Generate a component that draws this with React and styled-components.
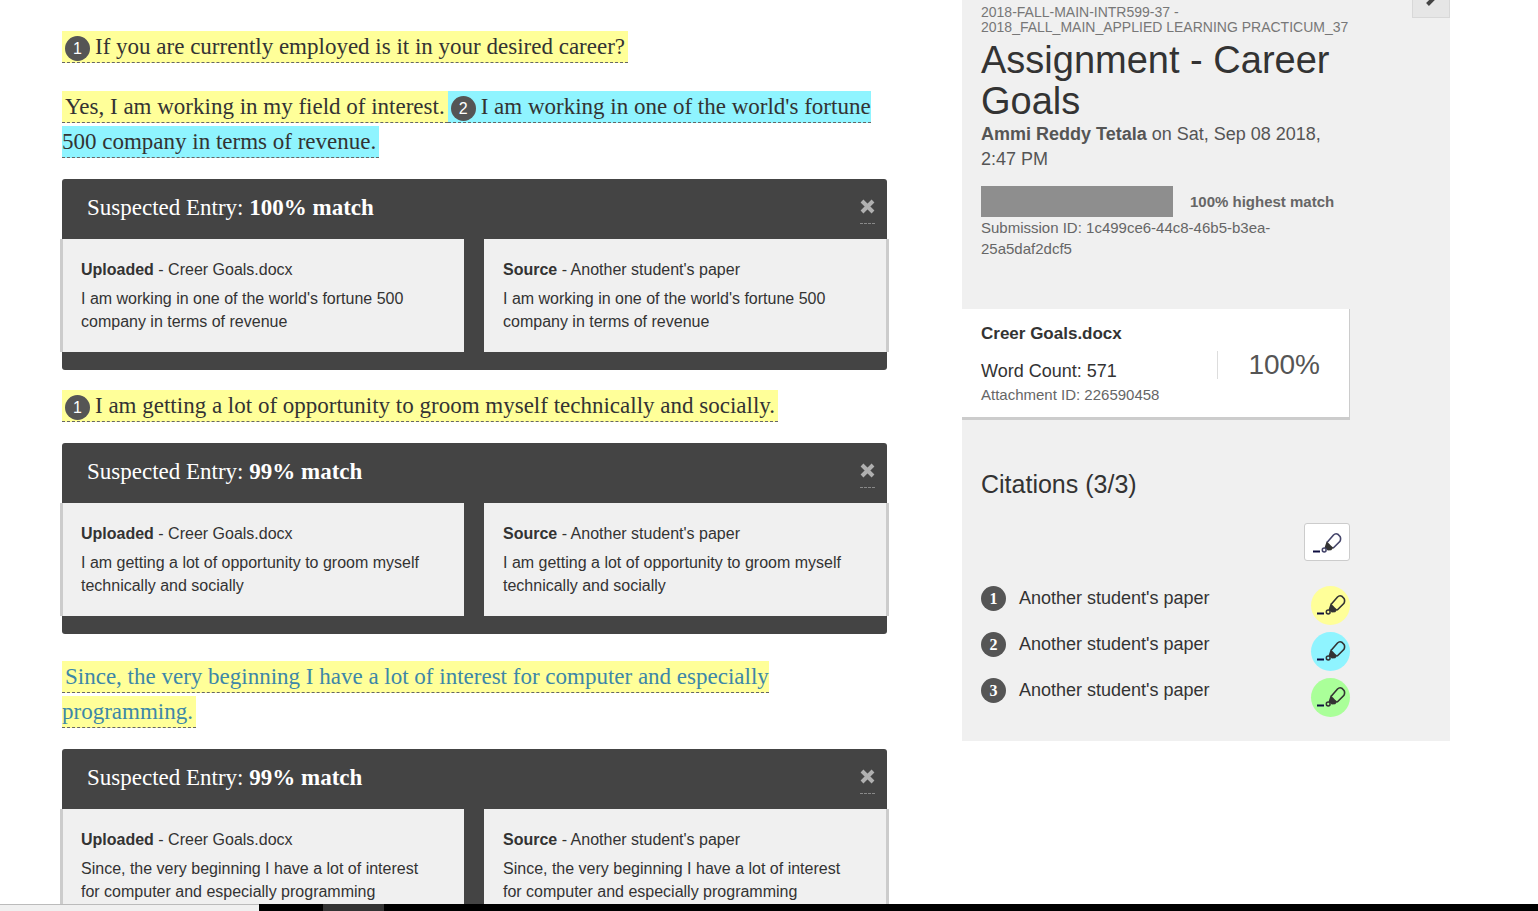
import React, { useState } from 'react';
import styled, { createGlobalStyle } from 'styled-components';

const sans = '"Liberation Sans", Arial, sans-serif';
const serif = '"Liberation Serif", serif';

const colors = {
  yellow: '#ffff99',
  blue: '#8ff4ff',
  green: '#aaff99',
};

const citations = [
  { id: 1, name: "Another student's paper", color: 'yellow' },
  { id: 2, name: "Another student's paper", color: 'blue' },
  { id: 3, name: "Another student's paper", color: 'green' },
];

function HighlighterIcon({ ink = '#44446a' }) {
  return (
    <svg width="30" height="22" viewBox="0 -2 30 22" aria-hidden="true">
      <path d="M1 18.5h7" stroke="#0d0d40" strokeWidth="2" />
      <path
        d="M15 9.5 21.5 2Q23.5 0 25.8 1.2L28 3.4Q29.2 5.6 28 8.2L21 15.2"
        fill="none"
        stroke={ink}
        strokeWidth="1.6"
      />
      <path d="M14.6 8.6 17.2 10.8 18.8 12.6 21.4 14.8 19.2 17.2 15.8 17.4 12.6 14.6Z" fill="#333" />
      <circle cx="12.2" cy="17" r="1.9" fill="none" stroke={ink} strokeWidth="1.5" />
    </svg>
  );
}

function SuspectedEntry({ match, text }) {
  const [open, setOpen] = useState(true);

  if (!open) return null;

  return (
    <Entry>
      <EntryHeader>
        <EntryTitle>
          Suspected Entry: <strong>{match}% match</strong>
        </EntryTitle>
        <CloseButton type="button" aria-label="Close" onClick={() => setOpen(false)}>
          <svg width="15" height="16" viewBox="0 0 15 16" aria-hidden="true">
            <path d="M2 2 13 13M13 2 2 13" stroke="#b0b0b0" strokeWidth="4" />
          </svg>
        </CloseButton>
      </EntryHeader>
      <EntryBody>
        <Pane $side="left">
          <PaneTitle><strong>Uploaded</strong> - Creer Goals.docx</PaneTitle>
          <PaneText>{text}</PaneText>
        </Pane>
        <Pane $side="right">
          <PaneTitle><strong>Source</strong> - Another student's paper</PaneTitle>
          <PaneText>{text}</PaneText>
        </Pane>
      </EntryBody>
    </Entry>
  );
}

function App() {
  return (
    <Screen>
      <GlobalStyle />
      <Page>
        <Report>
          <Paragraph>
            <Highlight $color="yellow">
              <Badge>1</Badge>If you are currently employed is it in your desired career?
            </Highlight>
          </Paragraph>
          <Paragraph>
            <Highlight $color="yellow">Yes, I am working in my field of interest.</Highlight>
            <Highlight $color="blue">
              <Badge>2</Badge>I am working in one of the world's fortune 500 company in terms of revenue.
            </Highlight>
          </Paragraph>
          <SuspectedEntry
            match={100}
            text="I am working in one of the world's fortune 500 company in terms of revenue"
          />
          <Paragraph $tight>
            <Highlight $color="yellow">
              <Badge>1</Badge>I am getting a lot of opportunity to groom myself technically and socially.
            </Highlight>
          </Paragraph>
          <SuspectedEntry
            match={99}
            text="I am getting a lot of opportunity to groom myself technically and socially"
          />
          <Paragraph>
            <Highlight $color="yellow" $active>
              Since, the very beginning I have a lot of interest for computer and especially programming.
            </Highlight>
          </Paragraph>
          <SuspectedEntry
            match={99}
            text="Since, the very beginning I have a lot of interest for computer and especially programming"
          />
        </Report>

        <Sidebar>
          <CollapseButton type="button" aria-label="Collapse panel">
            <svg width="10" height="14" viewBox="0 0 10 14" aria-hidden="true">
              <path d="M1.5 1.5 7 7 1.5 12.5" fill="none" stroke="#444" strokeWidth="4" />
            </svg>
          </CollapseButton>
          <Summary>
            <Course>2018-FALL-MAIN-INTR599-37 - 2018_FALL_MAIN_APPLIED LEARNING PRACTICUM_37</Course>
            <Title>Assignment - Career Goals</Title>
            <Author><strong>Ammi Reddy Tetala</strong> on Sat, Sep 08 2018, 2:47 PM</Author>
            <MatchRow>
              <MatchBar />
              <MatchLabel>100% highest match</MatchLabel>
            </MatchRow>
            <Meta>Submission ID: 1c499ce6-44c8-46b5-b3ea-25a5daf2dcf5</Meta>
          </Summary>
          <Attachment>
            <div>
              <FileName>Creer Goals.docx</FileName>
              <WordCount>Word Count: 571</WordCount>
              <Meta>Attachment ID: 226590458</Meta>
            </div>
            <Score>100%</Score>
          </Attachment>
          <Citations>
            <CitationsTitle>Citations (3/3)</CitationsTitle>
            <ToggleAll type="button" aria-label="Toggle all highlights">
              <HighlighterIcon />
            </ToggleAll>
            <CitationList>
              {citations.map((citation) => (
                <Citation key={citation.id}>
                  <Badge $list>{citation.id}</Badge>
                  <CitationName>{citation.name}</CitationName>
                  <ColorButton type="button" aria-label={`Toggle citation ${citation.id}`} $color={citation.color}>
                    <HighlighterIcon ink="#333" />
                  </ColorButton>
                </Citation>
              ))}
            </CitationList>
          </Citations>
        </Sidebar>
      </Page>
      <Taskbar>
        <TaskSearch />
        <TaskItem />
      </Taskbar>
    </Screen>
  );
}

export default App;

// Styled Components

const GlobalStyle = createGlobalStyle`
  * {
    box-sizing: border-box;
  }

  body {
    margin: 0;
    background: #fff;
    color: #333;
    font-family: ${sans};
  }

  h1, h2, h3, p, ul {
    margin: 0;
    padding: 0;
    font-weight: normal;
  }

  button {
    padding: 0;
    font: inherit;
    cursor: pointer;
  }
`;

const Screen = styled.div`
  height: 100vh;
  display: flex;
  flex-direction: column;
`;

const Page = styled.main`
  flex: 1;
  min-height: 0;
  overflow: hidden;
  display: grid;
  grid-template-columns: minmax(0, 825fr) minmax(0, 488fr);
  column-gap: 75px;
  align-items: start;
  padding: 0 88px 0 62px;
`;

const Report = styled.article`
  padding-top: 4px;
`;

const Paragraph = styled.p`
  margin-top: ${(props) => (props.$tight ? '18px' : '25px')};
  font-family: ${serif};
  font-size: 23px;
  line-height: 35px;
`;

const Highlight = styled.span`
  padding: 3px;
  background: ${(props) => colors[props.$color]};
  border-bottom: 1px dashed #666;
  color: ${(props) => (props.$active ? '#3d87a8' : '#333')};
`;

const Badge = styled.span`
  display: inline-block;
  flex: none;
  width: 25px;
  height: 25px;
  margin-right: ${(props) => (props.$list ? '0' : '5px')};
  border-radius: 50%;
  background: #555;
  color: #fff;
  font-family: ${(props) => (props.$list ? serif : sans)};
  font-size: 16px;
  font-weight: ${(props) => (props.$list ? 'bold' : 'normal')};
  line-height: 25px;
  text-align: center;
  vertical-align: middle;
`;

const Entry = styled.section`
  margin-top: 20px;
  padding-bottom: 18px;
  border-radius: 3px;
  background: #444;
`;

const EntryHeader = styled.header`
  display: flex;
  justify-content: space-between;
  align-items: flex-start;
  height: 60px;
  padding: 14px 12px 0 25px;
`;

const EntryTitle = styled.h3`
  color: #fff;
  font-family: ${serif};
  font-size: 23px;
  line-height: 30px;
`;

const CloseButton = styled.button`
  display: flex;
  width: 15px;
  height: 31px;
  padding-top: 6px;
  border: 0;
  border-bottom: 1px dashed #888;
  background: none;
`;

const EntryBody = styled.div`
  display: grid;
  grid-template-columns: 404fr 405fr;
  column-gap: 20px;
  margin: 0 -2px;
`;

const Pane = styled.div`
  padding: 19px 30px 19px ${(props) => (props.$side === 'left' ? '18px' : '19px')};
  border: 0 solid #ccc;
  border-${(props) => props.$side}-width: 3px;
  background: #f0f0f0;
`;

const PaneTitle = styled.h3`
  margin-bottom: 6px;
  font-size: 16px;
  line-height: 23px;
`;

const PaneText = styled.p`
  font-size: 16px;
  line-height: 23px;
`;

const Sidebar = styled.aside`
  position: relative;
  padding: 5px 100px 24px 0;
  background: #f0f0f0;
`;

/* sits half above the top edge of the panel */
const CollapseButton = styled.button`
  position: absolute;
  top: -20px;
  right: 0;
  display: flex;
  align-items: center;
  justify-content: center;
  width: 38px;
  height: 38px;
  border: 1px solid #d8d8d8;
  background: #e6e6e6;
`;

const Summary = styled.header`
  padding-left: 19px;
`;

const Course = styled.p`
  color: #777;
  font-size: 14px;
  line-height: 15px;
`;

const Title = styled.h1`
  margin-top: 5px;
  font-size: 38px;
  line-height: 41px;
`;

const Author = styled.p`
  color: #555;
  font-size: 18px;
  line-height: 25px;
`;

const MatchRow = styled.div`
  display: flex;
  align-items: center;
  gap: 17px;
  margin-top: 14px;
`;

const MatchBar = styled.div`
  width: 192px;
  height: 31px;
  background: #8e8e8e;
`;

const MatchLabel = styled.strong`
  color: #666;
  font-size: 15px;
`;

const Meta = styled.p`
  color: #666;
  font-size: 15px;
  line-height: 21px;
`;

const Attachment = styled.section`
  display: flex;
  align-items: center;
  justify-content: space-between;
  margin-top: 50px;
  padding: 12px 29px 12px 19px;
  border-right: 1px solid #ccc;
  border-bottom: 3px solid #ccc;
  background: #fff;
`;

const FileName = styled.h2`
  margin-bottom: 13px;
  font-size: 17px;
  font-weight: bold;
  line-height: 25px;
`;

const WordCount = styled.p`
  font-size: 18px;
  line-height: 25px;
`;

const Score = styled.div`
  margin-top: 4px;
  padding-left: 30px;
  border-left: 1px solid #ddd;
  color: #555;
  font-size: 28px;
  line-height: 28px;
`;

const Citations = styled.section`
  display: flex;
  flex-direction: column;
  padding: 49px 0 0 19px;
`;

const CitationsTitle = styled.h2`
  font-size: 25px;
  line-height: 30px;
`;

const ToggleAll = styled.button`
  display: flex;
  align-items: center;
  justify-content: center;
  align-self: flex-end;
  width: 46px;
  height: 38px;
  margin: 24px 0 25px;
  border: 1px solid #ccc;
  border-radius: 3px;
  background: #fff;
`;

const CitationList = styled.ul`
  display: flex;
  flex-direction: column;
  gap: 7px;
  list-style: none;
`;

const Citation = styled.li`
  display: flex;
  align-items: flex-start;
`;

const CitationName = styled.span`
  flex: 1;
  margin-left: 13px;
  font-size: 18px;
  line-height: 24px;
`;

const ColorButton = styled.button`
  display: flex;
  align-items: center;
  justify-content: center;
  width: 39px;
  height: 39px;
  padding-bottom: 4px;
  border: 0;
  border-radius: 50%;
  background: ${(props) => colors[props.$color]};
`;

const Taskbar = styled.footer`
  display: flex;
  gap: 64px;
  height: 7px;
  background: #000;
`;

const TaskSearch = styled.div`
  width: 259px;
  border-top: 1px solid #bbb;
  background: #f0f0f0;
`;

const TaskItem = styled.div`
  width: 61px;
  background: #333;
`;
